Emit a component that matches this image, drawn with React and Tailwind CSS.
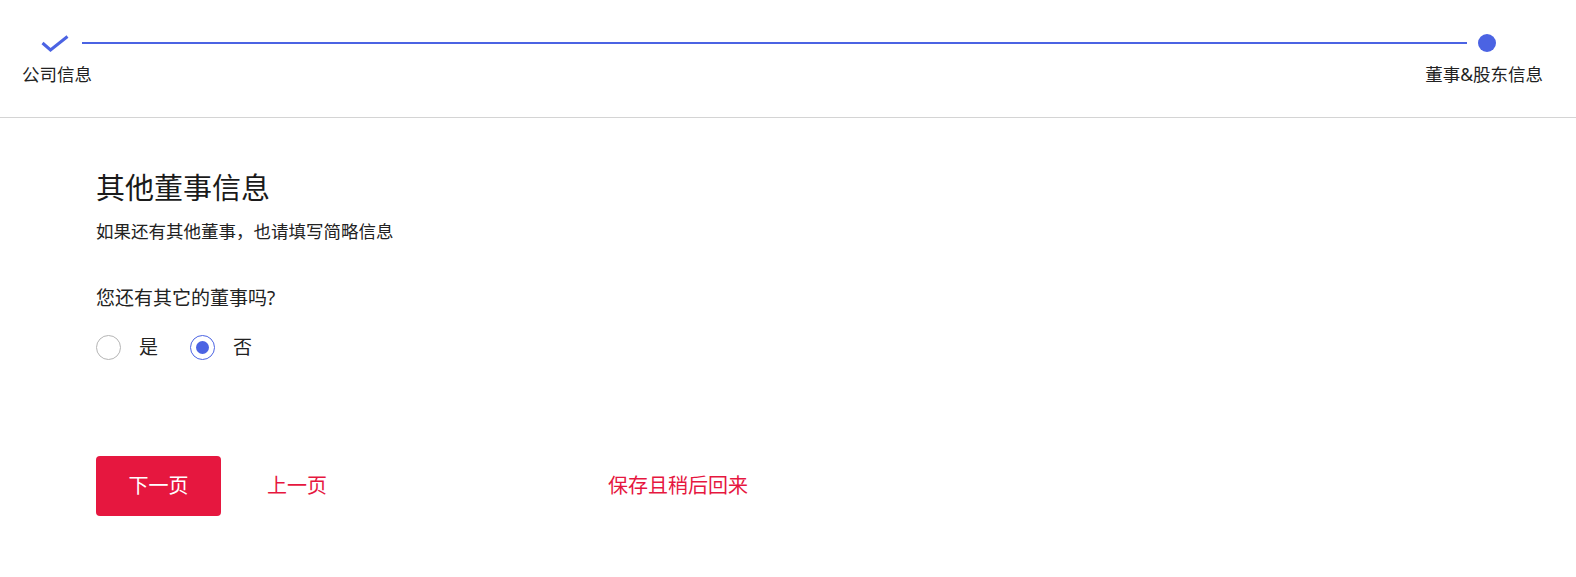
import React, { useState } from 'react';

const font = { fontFamily: '"Noto Sans", "Noto Sans CJK SC", sans-serif' };

const Radio = ({ checked, label, onClick }) => (
    <button onClick={onClick} className="flex items-center gap-[18px]">
        <span
            className={`w-[25px] h-[25px] rounded-full border flex items-center justify-center ${checked ? 'border-[#4b63e3]' : 'border-[#b5b5b5]'}`}
        >
            {checked && <span className="w-[13px] h-[13px] rounded-full bg-[#4b63e3]"></span>}
        </span>
        <span className="text-[19px] leading-[26px] text-[#222]">{label}</span>
    </button>
);

export default function App() {
    const [hasMore, setHasMore] = useState(false);

    return (
        <div className="w-full min-h-[577px] bg-white text-[#222]" style={font}>
            {/* Stepper */}
            <div className="h-[118px] border-b border-[#d4d4d4]">
                <div className="flex items-center pt-[34px]">
                    <svg width="28" height="17" viewBox="0 0 28 17" className="ml-[41px] shrink-0">
                        <polyline points="1.5,8 9.5,15 26.5,1.5" fill="none" stroke="#4b63e3" strokeWidth="3" />
                    </svg>
                    <div className="flex-1 h-[2px] bg-[#4b63e3] ml-[13px] mr-[11px]"></div>
                    <div className="w-[18px] h-[18px] rounded-full bg-[#4b63e3] mr-[80px] shrink-0"></div>
                </div>
                <div className="flex justify-between px-[22px] mt-[10px] text-[17.5px] leading-[24px]">
                    <span>公司信息</span>
                    <span className="pr-[11px]">董事&amp;股东信息</span>
                </div>
            </div>

            {/* Content */}
            <div className="pl-[96px] pt-[52px]">
                <h1 className="text-[29px] leading-[36px] font-normal text-[#1a1a1a]">其他董事信息</h1>
                <p className="mt-[13px] text-[17.5px] leading-[24px]">如果还有其他董事，也请填写简略信息</p>

                <p className="mt-[42px] text-[19px] leading-[26px]">您还有其它的董事吗?</p>
                <div className="mt-[23px] flex items-center gap-[32px]">
                    <Radio checked={hasMore} label="是" onClick={() => setHasMore(true)} />
                    <Radio checked={!hasMore} label="否" onClick={() => setHasMore(false)} />
                </div>

                <div className="mt-[96px] flex items-center">
                    <button className="w-[125px] h-[60px] rounded-[4px] bg-[#e6173f] text-white text-[20px]">下一页</button>
                    <button className="ml-[46px] text-[20px] text-[#e6173f]">上一页</button>
                    <button className="ml-[281px] text-[20px] text-[#e6173f]">保存且稍后回来</button>
                </div>
            </div>
        </div>
    );
}
